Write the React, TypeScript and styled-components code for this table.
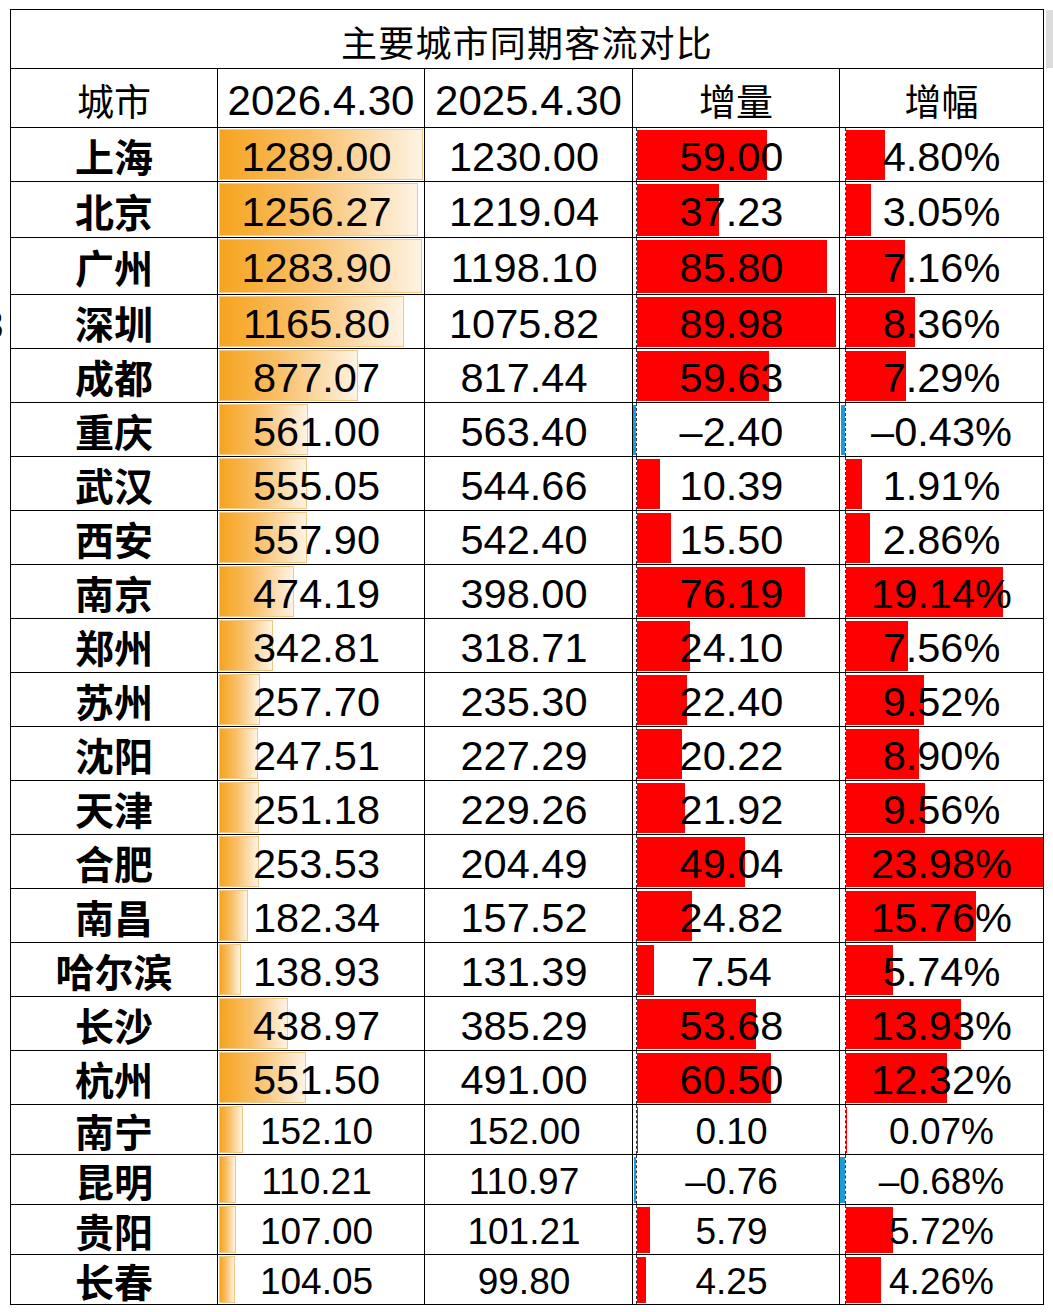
import React from 'react';
import styled, { createGlobalStyle } from 'styled-components';

const GlobalStyle = createGlobalStyle`
  html, body {
    margin: 0;
    padding: 0;
    background: #fff;
  }
  body {
    font-family: "Liberation Sans", Arial, "Noto Sans CJK SC", sans-serif;
    color: #000;
  }
`

type Row = { city: string; cur: number; prev: number; diff: number; pct: number };

const rows: Row[] = [
    { city: '上海', cur: 1289.0, prev: 1230.0, diff: 59.0, pct: 4.8 },
    { city: '北京', cur: 1256.27, prev: 1219.04, diff: 37.23, pct: 3.05 },
    { city: '广州', cur: 1283.9, prev: 1198.1, diff: 85.8, pct: 7.16 },
    { city: '深圳', cur: 1165.8, prev: 1075.82, diff: 89.98, pct: 8.36 },
    { city: '成都', cur: 877.07, prev: 817.44, diff: 59.63, pct: 7.29 },
    { city: '重庆', cur: 561.0, prev: 563.4, diff: -2.4, pct: -0.43 },
    { city: '武汉', cur: 555.05, prev: 544.66, diff: 10.39, pct: 1.91 },
    { city: '西安', cur: 557.9, prev: 542.4, diff: 15.5, pct: 2.86 },
    { city: '南京', cur: 474.19, prev: 398.0, diff: 76.19, pct: 19.14 },
    { city: '郑州', cur: 342.81, prev: 318.71, diff: 24.1, pct: 7.56 },
    { city: '苏州', cur: 257.7, prev: 235.3, diff: 22.4, pct: 9.52 },
    { city: '沈阳', cur: 247.51, prev: 227.29, diff: 20.22, pct: 8.9 },
    { city: '天津', cur: 251.18, prev: 229.26, diff: 21.92, pct: 9.56 },
    { city: '合肥', cur: 253.53, prev: 204.49, diff: 49.04, pct: 23.98 },
    { city: '南昌', cur: 182.34, prev: 157.52, diff: 24.82, pct: 15.76 },
    { city: '哈尔滨', cur: 138.93, prev: 131.39, diff: 7.54, pct: 5.74 },
    { city: '长沙', cur: 438.97, prev: 385.29, diff: 53.68, pct: 13.93 },
    { city: '杭州', cur: 551.5, prev: 491.0, diff: 60.5, pct: 12.32 },
    { city: '南宁', cur: 152.1, prev: 152.0, diff: 0.1, pct: 0.07 },
    { city: '昆明', cur: 110.21, prev: 110.97, diff: -0.76, pct: -0.68 },
    { city: '贵阳', cur: 107.0, prev: 101.21, diff: 5.79, pct: 5.72 },
    { city: '长春', cur: 104.05, prev: 99.8, diff: 4.25, pct: 4.26 },
];

// row heights in px (content only, the 1px grid gap draws the line)
const rowHeights = [53, 55, 56, ...Array(15).fill(53), 49, 49, 49, 49];

const fmt = (n: number) => (n < 0 ? '–' : '') + Math.abs(n).toFixed(2);

const DataBar = ({ value, scale, axis }: { value: number; scale: number; axis: number }) => {
    const w = Math.abs(value) * scale;
    const neg = value < 0;
    return (
        <>
            <Axis style={{ left: axis }} />
            <SolidBar $neg={neg} style={{ left: neg ? axis - w : axis + 1, width: w }} />
        </>
    );
};

export default function App() {
    return (
        <Page>
            <GlobalStyle />
            <CutLabel>3</CutLabel>
            <Sheet $rows={rowHeights}>
                <Title>主要城市同期客流对比</Title>
                <HeadCell>城市</HeadCell>
                <HeadCell $num>2026.4.30</HeadCell>
                <HeadCell $num>2025.4.30</HeadCell>
                <HeadCell>增量</HeadCell>
                <HeadCell>增幅</HeadCell>
                {rows.map((r, i) => {
                    const small = i >= 18;
                    return (
                        <React.Fragment key={r.city}>
                            <CityCell>{r.city}</CityCell>
                            <Cell $shift>
                                <GradientBar style={{ width: Math.min(r.cur * 204 / 1289, 205) }} />
                                <Value $small={small}>{r.cur.toFixed(2)}</Value>
                            </Cell>
                            <Cell $shift>
                                <Value $small={small}>{fmt(r.prev)}</Value>
                            </Cell>
                            <Cell $shift>
                                <DataBar value={r.diff} scale={2.21} axis={3} />
                                <Value $small={small}>{fmt(r.diff)}</Value>
                            </Cell>
                            <Cell>
                                <DataBar value={r.pct} scale={8.22} axis={5} />
                                <Value $small={small}>{fmt(r.pct)}%</Value>
                            </Cell>
                        </React.Fragment>
                    );
                })}
            </Sheet>
            <SideStrip />
        </Page>
    );
}

const Page = styled.div`
  position: relative;
  display: flex;
  align-items: flex-start;
  padding: 9px 0 0 10px;
  width: 1053px;
  height: 1312px;
  box-sizing: border-box;
  overflow: hidden;
`

const CutLabel = styled.span`
  position: absolute;
  left: -19px;
  top: 305px;
  font-size: 40px;
  line-height: 1;
  font-weight: 700;
`

const SideStrip = styled.div`
  width: 10px;
  height: 58px;
  margin: 1px 0 0 2px;
  background: #dcdcdc;
`

const Sheet = styled.div<{ $rows: number[] }>`
  display: grid;
  grid-template-columns: 206px 206px 207px 206px 203px;
  grid-template-rows: 58px 58px ${p => p.$rows.map(h => h + 'px').join(' ')};
  gap: 1px;
  border: 1px solid #000;
  background: #000;
`

const Cell = styled.div<{ $shift?: boolean }>`
  position: relative;
  display: flex;
  align-items: center;
  justify-content: center;
  overflow: hidden;
  background: #fff;
  line-height: 1;
  padding-top: 4px;
  padding-right: ${p => (p.$shift ? '9px' : '0')};
  box-sizing: border-box;
`

const Title = styled(Cell)`
  grid-column: 1 / -1;
  font-family: "Noto Sans CJK SC", sans-serif;
  font-size: 36px;
  letter-spacing: 1.2px;
  padding-top: 3px;
`

const HeadCell = styled(Cell)<{ $num?: boolean }>`
  font-family: ${p => (p.$num ? '"Liberation Sans", Arial, sans-serif' : '"Noto Sans CJK SC", sans-serif')};
  font-size: ${p => (p.$num ? '42px' : '37px')};
  padding-top: 5px;
`

const CityCell = styled(Cell)`
  font-family: "Noto Sans CJK SC", sans-serif;
  font-weight: 700;
  font-size: 39px;
  padding-top: 1px;
`

const Value = styled.span<{ $small?: boolean }>`
  position: relative;
  font-size: ${p => (p.$small ? '37px' : '41.5px')};
  line-height: 1;
  white-space: nowrap;
`

const GradientBar = styled.div`
  position: absolute;
  left: 1px;
  top: 1px;
  bottom: 1px;
  box-sizing: border-box;
  border: 1px solid #f2c887;
  background: linear-gradient(to right, #f6a41e 0%, #f9c06a 45%, #fef3e4 100%);
`

const Axis = styled.div`
  position: absolute;
  top: 0;
  bottom: 0;
  width: 0;
  border-left: 1px dashed #333;
`

const SolidBar = styled.div<{ $neg: boolean }>`
  position: absolute;
  top: 2px;
  bottom: 1px;
  background: ${p => (p.$neg ? '#1c9bd6' : '#ff0000')};
`
